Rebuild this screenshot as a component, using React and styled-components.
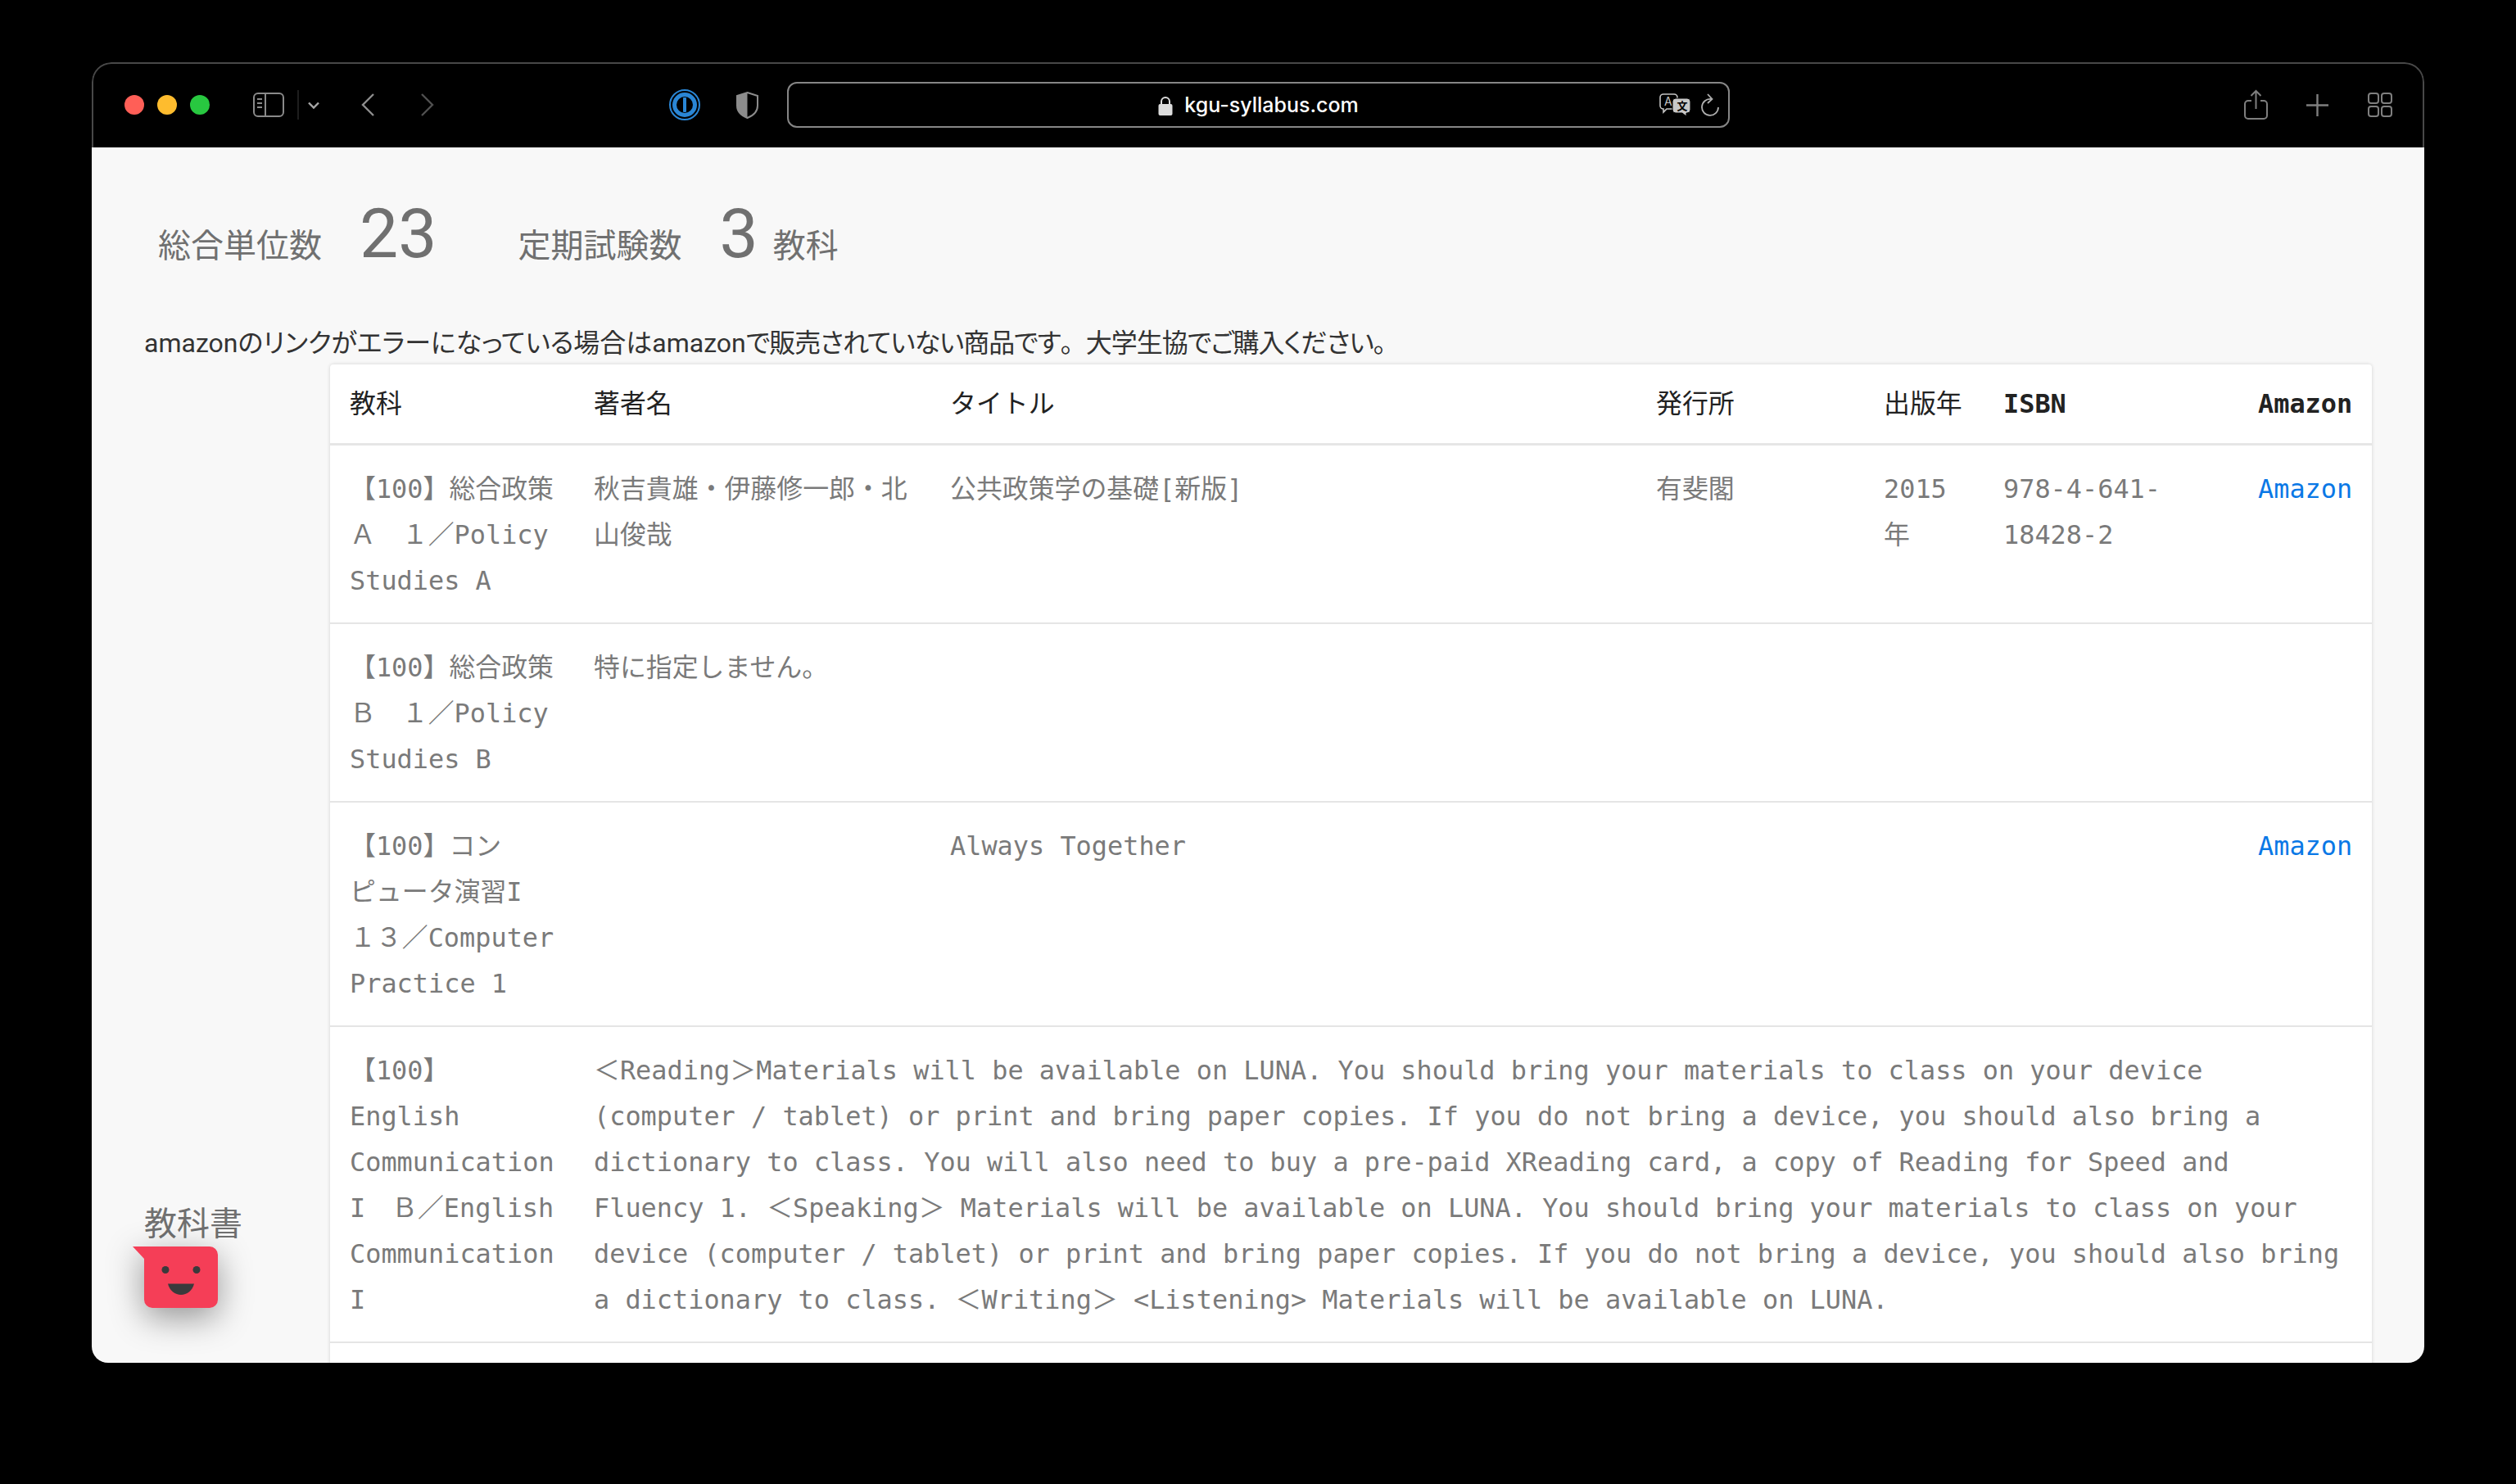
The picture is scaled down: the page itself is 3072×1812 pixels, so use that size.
import React from 'react';
import styled, { createGlobalStyle } from 'styled-components';

const GlobalStyle = createGlobalStyle`
  html, body {
    margin: 0;
    padding: 0;
    background: #000;
  }
`;

const Screen = styled.div`
  width: 3072px;
  height: 1812px;
  padding: 76px 112px 148px;
  box-sizing: border-box;
  background: #000;
  overflow: hidden;
`;

const Window = styled.div`
  height: 100%;
  display: flex;
  flex-direction: column;
  border-radius: 24px 24px 20px 20px;
  overflow: hidden;
`;

const Toolbar = styled.header`
  flex: none;
  height: 104px;
  box-sizing: border-box;
  display: flex;
  align-items: center;
  padding: 0 0 2px 38px;
  background: #000;
  border: 2px solid #484848;
  border-bottom: 0;
  border-radius: 24px 24px 0 0;
`;

const Lights = styled.div`
  display: flex;
  gap: 16px;
`;

const Light = styled.span`
  width: 24px;
  height: 24px;
  border-radius: 50%;
  background: ${({ $color }) => $color};
`;

const ToolIcon = styled.svg`
  flex: none;
  display: block;
  margin-left: ${({ $ml }) => $ml || 0}px;
  overflow: visible;
`;

const Divider = styled.span`
  flex: none;
  width: 2px;
  height: 36px;
  margin-left: 16px;
  background: #1e1e1e;
`;

const UrlBar = styled.div`
  flex: none;
  width: 1151px;
  height: 56px;
  margin-left: 35px;
  box-sizing: border-box;
  display: grid;
  grid-template-columns: 1fr auto 1fr;
  align-items: center;
  border: 2px solid #868686;
  border-radius: 12px;
`;

const Address = styled.div`
  grid-column: 2;
  display: flex;
  align-items: center;
  gap: 14px;
  padding-top: 1px;
  color: #fff;
  font: 500 25px/1 Inter, "Liberation Sans", sans-serif;
`;

const UrlActions = styled.div`
  grid-column: 3;
  justify-self: end;
  display: flex;
  align-items: center;
  gap: 13px;
  padding-right: 11px;
`;

const Page = styled.main`
  position: relative;
  flex: 1;
  min-height: 0;
  padding: 58px 64px 0;
  background: #f8f8f8;
  overflow: hidden;
  font-family: Roboto, "Noto Sans CJK JP", sans-serif;
  color: #707070;
`;

const Summary = styled.div`
  display: flex;
  align-items: baseline;
  padding-left: 17px;
  margin-bottom: 44px;
`;

const Label = styled.span`
  font-size: 40px;
  line-height: 96px;
  margin-right: ${({ $mr }) => $mr || 0}px;
`;

const Count = styled.span`
  font-size: 84px;
  font-weight: 400;
  line-height: 96px;
  margin-right: ${({ $mr }) => $mr}px;
`;

const Notice = styled.p`
  margin: 0;
  font-size: 32px;
  line-height: 52px;
  color: #333;
  font-feature-settings: "palt";
  white-space: nowrap;
`;

const NoticeTail = styled.span`
  letter-spacing: -1px;
`;

const FullStop = styled.span`
  font-feature-settings: normal;
`;

const Main = styled.div`
  display: flex;
  align-items: flex-start;
`;

const Side = styled.div`
  flex: none;
  width: 227px;
  padding-top: 1022px;
  font-size: 40px;
  line-height: 56px;
`;

const TableCard = styled.div`
  flex: none;
  width: 2493px;
  background: #fff;
  border-radius: 4px 4px 0 0;
  box-shadow: 0 0 4px rgba(0, 0, 0, 0.16);
`;

const Table = styled.table`
  width: 100%;
  table-layout: fixed;
  border-collapse: separate;
  border-spacing: 0;
  font: 31.9px/56px "DejaVu Sans Mono", "Noto Sans CJK JP", monospace;
  line-break: strict;
  color: #7a7a7a;
`;

const Th = styled.th`
  padding: 20px ${({ $right }) => ($right ? 26 : 24)}px 20px 24px;
  text-align: ${({ $right }) => ($right ? 'right' : 'left')};
  font-weight: ${({ $latin }) => ($latin ? 700 : 400)};
  color: #222;
  border-bottom: 3px solid #e6e6e6;
`;

const Td = styled.td`
  padding: 25px ${({ $right }) => ($right ? 26 : 24)}px 23px 24px;
  vertical-align: top;
  border-bottom: 2px solid #e5e5e5;
  text-align: ${({ $right }) => ($right ? 'right' : 'left')};
`;

const AmazonLink = styled.a`
  color: #0a78e6;
  text-decoration: none;
`;

const Mascot = styled.svg`
  position: absolute;
  left: 50px;
  top: 1342px;
  overflow: visible;
  filter: drop-shadow(0 12px 20px rgba(0, 0, 0, 0.4));
`;

const columns = [298, 435, 862, 278, 146, 311, 163];

const books = [
  {
    subject: '【100】総合政策Ａ　１／Policy Studies A',
    author: '秋吉貴雄・伊藤修一郎・北山俊哉',
    title: '公共政策学の基礎[新版]',
    publisher: '有斐閣',
    year: '2015年',
    isbn: true,
    link: true,
  },
  {
    subject: '【100】総合政策Ｂ　１／Policy Studies B',
    note: '特に指定しません。',
  },
  {
    subject: '【100】コンピュータ演習I　１３／Computer Practice 1',
    title: 'Always Together',
    link: true,
  },
  {
    subject: '【100】 English Communication I　Ｂ／English Communication I',
    note: '＜Reading＞Materials will be available on LUNA. You should bring your materials to class on your device (computer / tablet) or print and bring paper copies. If you do not bring a device, you should also bring a dictionary to class. You will also need to buy a pre-paid XReading card, a copy of Reading for Speed and Fluency 1. ＜Speaking＞ Materials will be available on LUNA. You should bring your materials to class on your device (computer / tablet) or print and bring paper copies. If you do not bring a device, you should also bring a dictionary to class. ＜Writing＞ <Listening> Materials will be available on LUNA.',
  },
];

function BookRow({ book }) {
  if (book.note) {
    return (
      <tr>
        <Td>{book.subject}</Td>
        <Td colSpan={6}>{book.note}</Td>
      </tr>
    );
  }
  return (
    <tr>
      <Td>{book.subject}</Td>
      <Td>{book.author}</Td>
      <Td>{book.title}</Td>
      <Td>{book.publisher}</Td>
      <Td>{book.year}</Td>
      <Td>{book.isbn && <>978-4-641-<wbr />18428-2</>}</Td>
      <Td $right>{book.link && <AmazonLink href="#">Amazon</AmazonLink>}</Td>
    </tr>
  );
}

function TranslateIcon() {
  return (
    <svg width="38" height="28" viewBox="0 0 38 28" fill="none">
      <path d="M5 1h13a4 4 0 0 1 4 4v10a4 4 0 0 1-4 4H9l-4 4v-4a4 4 0 0 1-4-4V5a4 4 0 0 1 4-4z" stroke="#c4c4c4" strokeWidth="1.6" />
      <text x="6" y="15" fontSize="14" fontFamily="Inter, sans-serif" fill="#c4c4c4">A</text>
      <path d="M20 6h14a4 4 0 0 1 4 4v10a4 4 0 0 1-4 4h-1v4l-5-4h-8a4 4 0 0 1-4-4V10a4 4 0 0 1 4-4z" fill="#c8c8c8" stroke="#000" strokeWidth="1" />
      <text x="21.5" y="20" fontSize="13" fontWeight="700" fontFamily="'Noto Sans CJK JP', sans-serif" fill="#000">文</text>
    </svg>
  );
}

export default function App() {
  return (
    <Screen>
      <GlobalStyle />
      <Window>
        <Toolbar>
          <Lights>
            <Light $color="#ff5f57" />
            <Light $color="#febc2e" />
            <Light $color="#28c840" />
          </Lights>
          <ToolIcon $ml={53} width="38" height="30" viewBox="0 0 38 30" fill="none" stroke="#8a8a8a" strokeWidth="2">
            <rect x="1" y="1" width="36" height="28" rx="5" />
            <path d="M15 1v28" />
            <path d="M5 8h6M5 13h6M5 18h6" />
          </ToolIcon>
          <Divider />
          <ToolIcon $ml={11} width="14" height="9" viewBox="0 0 14 9" fill="none" stroke="#a8a8a8" strokeWidth="2.4">
            <path d="M1 1.5l6 6 6-6" />
          </ToolIcon>
          <ToolIcon $ml={51} width="16" height="28" viewBox="0 0 16 28" fill="none" stroke="#8e8e8e" strokeWidth="2.4">
            <path d="M15 1L2 14l13 13" />
          </ToolIcon>
          <ToolIcon $ml={57} width="16" height="28" viewBox="0 0 16 28" fill="none" stroke="#505050" strokeWidth="2.4">
            <path d="M1 1l13 13L1 27" />
          </ToolIcon>
          <ToolIcon $ml={287} width="38" height="38" viewBox="0 0 38 38" fill="none">
            <circle cx="19" cy="19" r="18" stroke="#2a86d5" strokeWidth="2" />
            <circle cx="19" cy="19" r="12.5" stroke="#2a86d5" strokeWidth="5" />
            <rect x="17" y="10" width="4" height="18" rx="1" fill="#2a86d5" />
          </ToolIcon>
          <ToolIcon $ml={44} width="27" height="33" viewBox="0 0 27 33" fill="none">
            <path d="M13.5 1L26 5v12c0 8-6 12.500-12.500 15C7 29.500 1 25 1 17V5z" stroke="#8c8c8c" strokeWidth="2" />
            <path d="M13.500 1L1 5v12c0 8 6 12.500 12.500 15z" fill="#8c8c8c" />
          </ToolIcon>
          <UrlBar>
            <Address>
              <svg width="18" height="24" viewBox="0 0 18 24" fill="none">
                <path d="M4 11V7a5 5 0 0 1 10 0v4" stroke="#dcdcdc" strokeWidth="2" />
                <rect x="0.500" y="10" width="17" height="14" rx="2" fill="#dcdcdc" />
              </svg>
              kgu-syllabus.com
            </Address>
            <UrlActions>
              <TranslateIcon />
              <svg width="22" height="28" viewBox="0 0 22 28" fill="none" stroke="#b0b0b0" strokeWidth="1.800">
                <path d="M12 7a10 10 0 1 0 9 10" />
                <path d="M8 1l5.500 6L8 12" />
              </svg>
            </UrlActions>
          </UrlBar>
          <ToolIcon $ml={628} width="29" height="36" viewBox="0 0 29 36" fill="none" stroke="#7f7f7f" strokeWidth="2">
            <path d="M9 13H5a4 4 0 0 0-4 4v14a4 4 0 0 0 4 4h19a4 4 0 0 0 4-4V17a4 4 0 0 0-4-4h-4" />
            <path d="M14.500 23V1.500M8.500 7l6-6 6 6" />
          </ToolIcon>
          <ToolIcon $ml={47} width="27" height="27" viewBox="0 0 27 27" fill="none" stroke="#7f7f7f" strokeWidth="2.400">
            <path d="M13.500 0v27M0 13.500h27" />
          </ToolIcon>
          <ToolIcon $ml={48} width="30" height="30" viewBox="0 0 30 30" fill="none" stroke="#7f7f7f" strokeWidth="2">
            <rect x="1" y="1" width="12" height="12" rx="3" />
            <rect x="17" y="1" width="12" height="12" rx="3" />
            <rect x="1" y="17" width="12" height="12" rx="3" />
            <rect x="17" y="17" width="12" height="12" rx="3" />
          </ToolIcon>
        </Toolbar>
        <Page>
          <Summary>
            <Label $mr={46}>総合単位数</Label>
            <Count $mr={99}>23</Count>
            <Label $mr={46}>定期試験数</Label>
            <Count $mr={18}>3</Count>
            <Label>教科</Label>
          </Summary>
          <Notice>
            amazonのリンクがエラーになっている場合はamazon
            <NoticeTail>
              で販売されていない商品です<FullStop>。</FullStop>大学生協でご購入ください<FullStop>。</FullStop>
            </NoticeTail>
          </Notice>
          <Main>
            <Side>教科書</Side>
            <TableCard>
              <Table lang="ja">
                <colgroup>
                  {columns.map((width, i) => (
                    <col key={i} width={width} />
                  ))}
                </colgroup>
                <thead>
                  <tr>
                    <Th>教科</Th>
                    <Th>著者名</Th>
                    <Th>タイトル</Th>
                    <Th>発行所</Th>
                    <Th>出版年</Th>
                    <Th $latin>ISBN</Th>
                    <Th $latin $right>Amazon</Th>
                  </tr>
                </thead>
                <tbody>
                  {books.map((book, i) => (
                    <BookRow key={i} book={book} />
                  ))}
                  <tr>
                    <Td colSpan={7}>&nbsp;</Td>
                  </tr>
                </tbody>
              </Table>
            </TableCard>
          </Main>
          <Mascot width="104" height="75" viewBox="0 0 104 75">
            <path d="M0 0H94a10 10 0 0 1 10 10V65a10 10 0 0 1-10 10H24a10 10 0 0 1-10-10V15z" fill="#f53e57" />
            <circle cx="40" cy="28.500" r="4.500" fill="#3a3a3c" />
            <circle cx="78" cy="28.500" r="4.500" fill="#3a3a3c" />
            <path d="M43 45.500H75C73 54 66 59 59 59S45 54 43 45.500z" fill="#3a3a3c" />
          </Mascot>
        </Page>
      </Window>
    </Screen>
  );
}
